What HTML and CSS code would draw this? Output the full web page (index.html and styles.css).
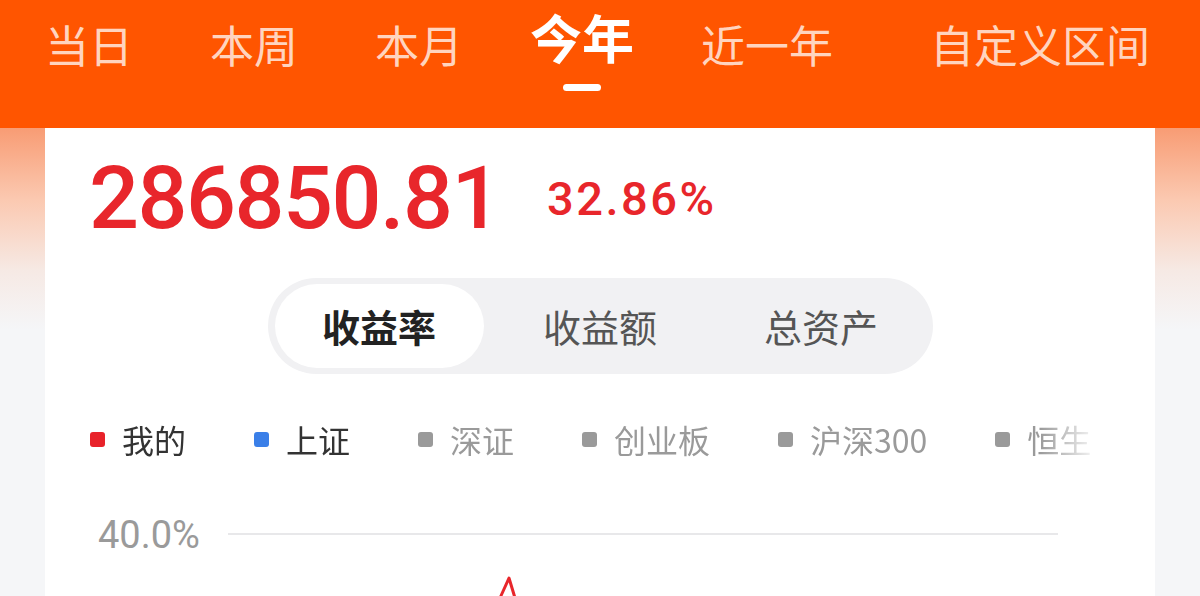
FILE: index.html
```html
<!DOCTYPE html>
<html lang="zh-CN">
<head>
  <meta charset="UTF-8">
  <meta name="viewport" content="width=device-width, initial-scale=1.0">
  <title>收益</title>
  <link rel="stylesheet" href="styles.css">
</head>
<body>
  <div class="header">
    <div class="tabs">
      <div class="tab">当日</div>
      <div class="tab">本周</div>
      <div class="tab">本月</div>
      <div class="tab tab-active">今年<span class="tab-line"></span></div>
      <div class="tab">近一年</div>
      <div class="tab tab-last">自定义区间</div>
    </div>
  </div>

  <div class="card">
    <div class="summary">
      <span class="total">286850.81</span>
      <span class="rate">32.86%</span>
    </div>

    <div class="segmented">
      <div class="seg seg-on">收益率</div>
      <div class="seg">收益额</div>
      <div class="seg">总资产</div>
    </div>

    <div class="legend">
      <div class="legend-item on"><span class="dot dot-red"></span>我的</div>
      <div class="legend-item on"><span class="dot dot-blue"></span>上证</div>
      <div class="legend-item"><span class="dot"></span>深证</div>
      <div class="legend-item"><span class="dot"></span>创业板</div>
      <div class="legend-item"><span class="dot"></span>沪深300</div>
      <div class="legend-item"><span class="dot"></span>恒生</div>
    </div>

    <div class="chart">
      <span class="axis-label">40.0%</span>
      <svg class="plot" width="830" height="80" viewBox="0 0 830 80">
        <line x1="0" y1="18" x2="830" y2="18" stroke="#e8e8ea" stroke-width="2"/>
        <polyline points="272,82 281,62 287,82" fill="none" stroke="#e8262b" stroke-width="3" stroke-linejoin="round"/>
      </svg>
    </div>
  </div>
</body>
</html>
```

FILE: styles.css
```css
body {
  margin: 0;
  font-family: "Noto Sans CJK SC", "Noto Sans", sans-serif;
  background: linear-gradient(180deg, #f89c74 128px, #fbc9b1 200px, #f6e9e4 270px, #f5f6f8 330px);
  background-color: #f5f6f8;
  min-height: 596px;
  overflow: hidden;
}

/* top period tabs */
.header {
  background-color: #ff5500;
  height: 128px;
}
.tabs {
  display: flex;
  align-items: flex-start;
  gap: 77px;
  padding-left: 45px;
}
.tab {
  display: flex;
  flex-direction: column;
  align-items: center;
  font-size: 44px;
  line-height: 1;
  padding-top: 22px;
  color: #ffd4bf;
  white-space: nowrap;
}
.tab-active {
  font-size: 52px;
  font-weight: 700;
  color: #ffffff;
  padding-top: 11px;
  margin: 0 -10px;
}
.tab-line {
  width: 38px;
  height: 7px;
  border-radius: 4px;
  background-color: #ffffff;
  margin-top: 21px;
}
.tab-last {
  margin-left: 20px;
}

/* card */
.card {
  background-color: #ffffff;
  margin: 0 45px;
  padding-top: 26px;
  min-height: 500px;
}
.summary {
  display: flex;
  align-items: center;
  padding-left: 44px;
  color: #e8262b;
  font-family: Roboto, "Liberation Sans", sans-serif;
  font-weight: 500;
  line-height: 1;
}
.total {
  font-size: 88px;
  letter-spacing: -1.5px;
}
.rate {
  font-size: 47px;
  letter-spacing: 2.5px;
  margin-left: 47px;
}

.segmented {
  display: flex;
  gap: 12px;
  width: fit-content;
  margin: 36px auto 0;
  padding: 6px 7px;
  background-color: #f1f1f3;
  border-radius: 48px;
}
.seg {
  width: 209px;
  height: 84px;
  line-height: 84px;
  text-align: center;
  font-size: 38px;
  color: #555555;
  border-radius: 42px;
}
.seg-on {
  background-color: #ffffff;
  color: #222222;
  font-weight: 700;
}

.legend {
  display: flex;
  gap: 68px;
  margin: 41px 55px 0 45px;
  padding: 8px 0;
  overflow: hidden;
  white-space: nowrap;
  font-size: 32px;
  line-height: 1;
  color: #9a9a9a;
  -webkit-mask-image: linear-gradient(to right, #000 calc(100% - 60px), transparent);
  mask-image: linear-gradient(to right, #000 calc(100% - 60px), transparent);
}
.legend-item {
  display: flex;
  align-items: center;
}
.legend-item.on {
  color: #333333;
}
.dot {
  width: 15px;
  height: 15px;
  border-radius: 3px;
  background-color: #9a9a9a;
  margin-right: 17px;
  flex-shrink: 0;
}
.dot-red {
  background-color: #e8222a;
}
.dot-blue {
  background-color: #3a7fe8;
}

.chart {
  display: flex;
  align-items: flex-start;
  margin-top: 53px;
  padding-left: 53px;
}
.axis-label {
  width: 130px;
  font-family: Roboto, "Liberation Sans", sans-serif;
  font-size: 38px;
  line-height: 1;
  color: #9a9a9a;
}
.plot {
  display: block;
  overflow: visible;
}
```
